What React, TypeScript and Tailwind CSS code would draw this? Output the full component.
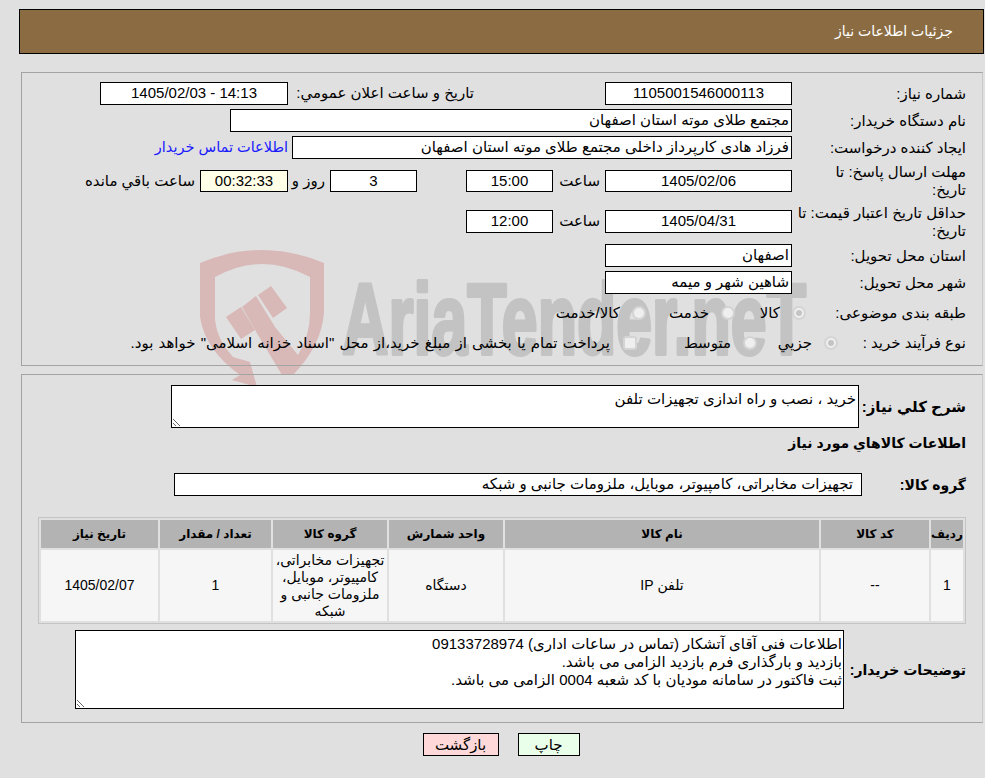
import type { ReactNode } from 'react';

function Box({ className = '', children }: { className?: string; children?: ReactNode }) {
  return (
    <div className={`flex shrink-0 items-center border border-black bg-white ${className}`}>{children}</div>
  );
}

function Label({ width, children }: { width: string; children: ReactNode }) {
  return <div className={`shrink-0 leading-[18px] ${width}`}>{children}</div>;
}

function Radio({ checked = false }: { checked?: boolean }) {
  return (
    <span className="flex h-[14px] w-[14px] shrink-0 items-center justify-center rounded-full border-2 border-[#d4d4d4] bg-[#efefef]">
      {checked && <span className="h-[6px] w-[6px] rounded-full bg-[#c4c4c4]" />}
    </span>
  );
}

function Option({ width, checked, children }: { width: string; checked?: boolean; children: ReactNode }) {
  return (
    <div className={`flex shrink-0 items-center gap-3 ${width}`}>
      <Radio checked={checked} />
      <span>{children}</span>
    </div>
  );
}

/** Watermark behind the form: shield, gavel and site name. */
function Watermark() {
  return (
    <svg dir="ltr" className="pointer-events-none absolute left-0 top-0 h-[778px] w-[985px]" viewBox="0 0 985 778" aria-hidden>
      <g fill="#d9b8b8">
        <path d="M200 263 Q262 237 324 263 L324 312 Q322 345 293 375 L282 375 L258 335 L242 307 L256 296 L275 327 L298 355 Q310 335 310 313 L310 277 Q262 251 215 277 L215 320 Q217 340 233 357 L250 362 L257 387 L232 380 L240 375 Q205 350 200 317 Z" />
        <path d="M226 317 L241 307 L255 330 L241 339 Z" />
        <path d="M258 295 L271 286 L287 308 L273 318 Z" />
      </g>
      <text
        x="342"
        y="354"
        direction="ltr"
        textAnchor="start"
        fontFamily="'Liberation Sans', sans-serif"
        fontWeight="700"
        fontSize="100"
        fill="#c3c3c3"
        stroke="#c3c3c3"
        strokeWidth="4"
        strokeLinejoin="round"
        textLength="464"
        lengthAdjust="spacingAndGlyphs"
      >
        AriaTender.neT
      </text>
    </svg>
  );
}

const headers = ['رديف', 'کد کالا', 'نام کالا', 'واحد شمارش', 'گروه کالا', 'تعداد / مقدار', 'تاریخ نیاز'];

export default function App() {
  return (
    <div dir="rtl" className="relative h-[778px] overflow-hidden bg-[#e0e0e0] font-['Liberation_Sans','DejaVu_Sans',sans-serif] text-[15px] text-black">
      <Watermark />
      <div className="relative">
        <div className="ml-[19px] mr-px mt-[9px] flex h-[45px] items-center border border-black bg-[#8b6c42] pr-[30px] text-[14px] text-white">
          جزئیات اطلاعات نیاز
        </div>

        <section className="ml-[21px] mr-[2px] mt-[18px] border border-[#a3a3a3] border-r-[#c9c9c9] pb-[10px] pr-[16px] pt-[9px]">
          <div className="flex h-[23px] items-center">
            <Label width="w-[174px]">شماره نیاز:</Label>
            <Box className="h-[23px] w-[187px] justify-center">1105001546000113</Box>
            <div className="mr-[131px] w-[181px] shrink-0 whitespace-nowrap">تاریخ و ساعت اعلان عمومي:</div>
            <Box className="mr-[5px] h-[23px] w-[188px] justify-center">14:13 - 1405/02/03</Box>
          </div>
          <div className="mt-[4px] flex h-[23px] items-center">
            <Label width="w-[174px]">نام دستگاه خریدار:</Label>
            <Box className="h-[23px] w-[562px] pr-[2px]">مجتمع طلای موته استان اصفهان</Box>
          </div>
          <div className="mt-[4px] flex h-[23px] items-center">
            <Label width="w-[174px]">ایجاد کننده درخواست:</Label>
            <Box className="h-[23px] w-[500px] pr-[2px]">فرزاد هادی کارپرداز داخلی مجتمع طلای موته استان اصفهان</Box>
            <a className="mr-[4px] text-[14.5px] text-[#1a1aff]">اطلاعات تماس خریدار</a>
          </div>
          <div className="mt-[5px] flex h-[34px] items-center">
            <Label width="w-[174px] pl-[12px]">مهلت ارسال پاسخ: تا تاریخ:</Label>
            <Box className="h-[22px] w-[187px] justify-center">1405/02/06</Box>
            <div className="w-[52px] shrink-0 pr-[5px]">ساعت</div>
            <Box className="h-[22px] w-[87px] justify-center">15:00</Box>
            <div className="w-[49px] shrink-0" />
            <Box className="h-[22px] w-[87px] justify-center">3</Box>
            <div className="w-[42px] shrink-0 pr-[5px]">روز و</div>
            <Box className="h-[22px] w-[88px] justify-center !bg-[#ffffe8]">00:32:33</Box>
            <div className="shrink-0 pr-[5px]">ساعت باقي مانده</div>
          </div>
          <div className="mt-[7px] flex h-[33px] items-center">
            <Label width="w-[174px]">حداقل تاریخ اعتبار قیمت: تا تاریخ:</Label>
            <Box className="h-[23px] w-[187px] justify-center">1405/04/31</Box>
            <div className="w-[52px] shrink-0 pr-[5px]">ساعت</div>
            <Box className="h-[23px] w-[87px] justify-center">12:00</Box>
          </div>
          <div className="mt-[6px] flex h-[23px] items-center">
            <Label width="w-[174px]">استان محل تحویل:</Label>
            <Box className="h-[23px] w-[187px] pr-[2px]">اصفهان</Box>
          </div>
          <div className="mt-[4px] flex h-[23px] items-center">
            <Label width="w-[174px]">شهر محل تحویل:</Label>
            <Box className="h-[23px] w-[187px] pr-[2px]">شاهین شهر و میمه</Box>
          </div>
          <div className="mt-[7px] flex h-[24px] items-center">
            <Label width="w-[160px]">طبقه بندی موضوعی:</Label>
            <Option width="w-[71px]" checked>کالا</Option>
            <Option width="w-[89px]">خدمت</Option>
            <Option width="w-[100px]">کالا/خدمت</Option>
          </div>
          <div className="mt-[6px] flex h-[24px] items-center">
            <Label width="w-[128px]">نوع فرآیند خرید :</Label>
            <Option width="w-[81px]" checked>جزيي</Option>
            <Option width="w-[120px]">متوسط</Option>
            <div className="flex shrink-0 items-center gap-[13px]">
              <span className="h-[14px] w-[14px] shrink-0 rounded-[3px] border-2 border-[#d4d4d4] bg-[#efefef]" />
              <span className="[word-spacing:1px]">پرداخت تمام یا بخشی از مبلغ خرید،از محل "اسناد خزانه اسلامی" خواهد بود.</span>
            </div>
          </div>
        </section>

        <section className="ml-[21px] mr-[2px] mt-[8px] border border-[#a3a3a3] border-r-[#c9c9c9] pb-[13px] pr-[16px] pt-[10px]">
          <div className="flex items-center">
            <Label width="w-[107px] text-[15px] font-bold">شرح کلي نیاز:</Label>
            <textarea
              readOnly
              value="خرید ، نصب و راه اندازی تجهیزات تلفن"
              className="h-[43px] w-[688px] shrink-0 resize border border-black bg-white px-[2px] py-[4px] leading-[18px] outline-none"
            />
          </div>
          <div className="mt-[6px] h-[18px] text-[14px] font-bold leading-[18px]">اطلاعات کالاهاي مورد نیاز</div>
          <div className="mt-[21px] flex items-center">
            <Label width="w-[104px] text-[14px] font-bold">گروه کالا:</Label>
            <Box className="h-[23px] w-[688px] pr-[8px]">تجهیزات مخابراتی، کامپیوتر، موبایل، ملزومات جانبی و شبکه</Box>
          </div>

          <table className="mt-[21px] h-[107px] w-[928px] table-fixed border-separate border-spacing-[2px] border border-[#c4c4c4] text-center text-[14px]">
            <colgroup>
              <col className="w-[32px]" />
              <col className="w-[108px]" />
              <col className="w-[314px]" />
              <col className="w-[114px]" />
              <col className="w-[114px]" />
              <col className="w-[111px]" />
              <col className="w-[117px]" />
            </colgroup>
            <thead>
              <tr className="h-[28px] bg-[#b3b3b3] text-[12px] font-bold">
                {headers.map((h) => (
                  <th key={h} className="p-0 font-bold">{h}</th>
                ))}
              </tr>
            </thead>
            <tbody>
              <tr className="bg-[#f6f6f6]">
                <td className="p-0">1</td>
                <td className="p-0">--</td>
                <td className="p-0">تلفن IP</td>
                <td className="p-0">دستگاه</td>
                <td className="p-0 leading-[17px]">تجهیزات مخابراتی، کامپیوتر، موبایل، ملزومات جانبی و شبکه</td>
                <td className="p-0">1</td>
                <td className="p-0">1405/02/07</td>
              </tr>
            </tbody>
          </table>

          <div className="mt-[6px] flex items-center">
            <Label width="w-[122px] text-[14px] font-bold">توضیحات خریدار:</Label>
            <textarea
              readOnly
              value={'اطلاعات فنی آقای آتشکار (تماس در ساعات اداری) 09133728974\nبازدید و بارگذاری فرم بازدید الزامی می باشد.\nثبت فاکتور در سامانه مودیان با کد شعبه 0004 الزامی می باشد.'}
              className="h-[79px] w-[769px] shrink-0 resize border border-black bg-white px-px py-[4px] leading-[18px] outline-none"
            />
          </div>
        </section>

        <div className="mt-[10px] flex justify-center gap-[19px] pl-[17px]">
          <button className="h-[23px] w-[62px] border border-black bg-[#eaffea]">چاپ</button>
          <button className="h-[23px] w-[76px] border border-black bg-[#ffd9d9]">بازگشت</button>
        </div>
      </div>
    </div>
  );
}
